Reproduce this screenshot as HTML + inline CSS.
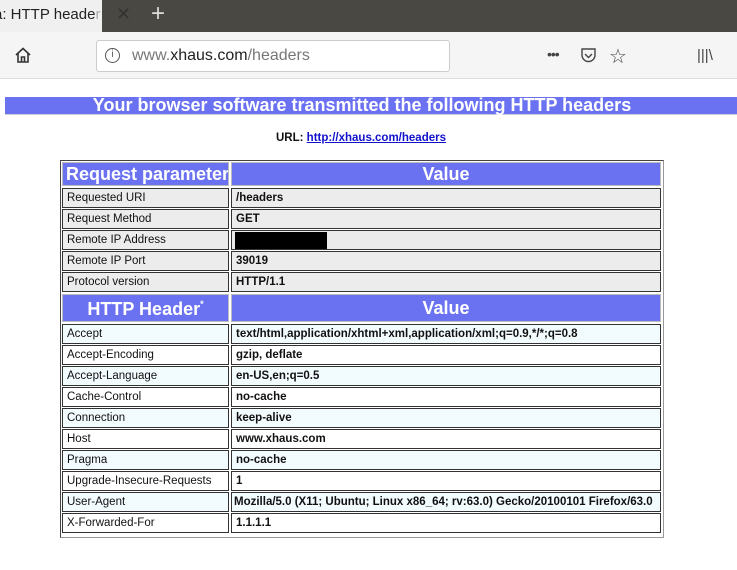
<!DOCTYPE html>
<html><head><style>
*{margin:0;padding:0;box-sizing:border-box}
body{width:737px;height:570px;background:#fff;position:relative;overflow:hidden;font-family:"Liberation Sans",sans-serif}
.a{position:absolute}
.c{position:absolute;border:1px solid #333;font-size:11.5px;line-height:18px;padding-left:4px;color:#111;white-space:nowrap;overflow:hidden}
.g{background:#ececec}
.w{background:#fff}
.l{background:#f2fbfe}
.h{background:#6b72f2;color:#fff;font-weight:bold;font-size:18px;border-color:#bbb}
.b{font-weight:bold}
</style></head><body>
<div class="a" style="left:0;top:0;width:737px;height:32px;background:#4a4843"></div>
<div class="a" style="left:0;top:0;width:102px;height:32px;background:#f0f0f0;overflow:hidden"><div style="position:absolute;left:-6px;top:6px;font-size:15px;color:#222;white-space:nowrap">a: HTTP heade<span style="color:#aaa">r</span></div></div>
<div class="a" style="left:116px;top:4px;font-size:18px;color:#333">✕</div>
<div class="a" style="left:151px;top:0px;font-size:24px;color:#ddd;font-weight:300">+</div>
<div class="a" style="left:0;top:32px;width:737px;height:47px;background:#f5f5f5;border-bottom:1px solid #ddd"></div>
<svg class="a" style="left:14px;top:46px" width="18" height="18" viewBox="0 0 18 18"><path d="M2 9L9 2.5L16 9M4 7.5V16H14V7.5M7.5 16V11H10.5V16" fill="none" stroke="#333" stroke-width="1.6"/></svg>
<div class="a" style="left:96px;top:40px;width:354px;height:32px;background:#fff;border:1px solid #ccc;border-radius:3px"></div>
<div class="a" style="left:105px;top:48px;width:15px;height:15px;border:1.3px solid #555;border-radius:50%;font-size:10px;line-height:12px;text-align:center;color:#555">i</div>
<div class="a" style="left:132px;top:47px;font-size:16px;color:#777">www.<span style="color:#222">xhaus.com</span>/headers</div>
<div class="a" style="left:547px;top:46px;font-size:14px;color:#444;letter-spacing:-1px">•••</div>
<svg class="a" style="left:580px;top:47px" width="17" height="17" viewBox="0 0 17 17"><path d="M2 2H15V8A6.5 6.5 0 0 1 2 8Z" fill="none" stroke="#444" stroke-width="1.4"/><path d="M5 7L8.5 10.5L12 7" fill="none" stroke="#444" stroke-width="1.4"/></svg>
<div class="a" style="left:609px;top:44px;font-size:20px;color:#444">☆</div>
<div class="a" style="left:697px;top:47px;font-size:15px;color:#444">|||\</div>
<div class="a" style="left:5px;top:97px;width:732px;height:18px;background:#6b72f2;border-bottom:1px solid #ccd"></div>
<div class="a" style="left:0px;top:95px;width:724px;text-align:center;color:#fff;font-weight:bold;font-size:18px;line-height:21px">Your browser software transmitted the following HTTP headers</div>
<div class="a" style="left:0;top:132px;width:722px;text-align:center;font-size:11.5px;font-weight:bold;color:#111">URL: <span style="color:#11c;text-decoration:underline">http://xhaus.com/headers</span></div>
<div class="a" style="left:60px;top:160px;width:604px;height:378px;border:1px solid #444;border-right-color:#999;border-bottom-color:#999"></div>
<div class="c h" style="left:62px;top:162px;width:167px;height:24px;line-height:22px;padding-left:3px">Request parameter</div>
<div class="c h" style="left:231px;top:162px;width:430px;height:24px;line-height:22px;text-align:center;padding:0">Value</div>
<div class="c g" style="left:62px;top:188px;width:167px;height:20px">Requested URI</div><div class="c g b" style="left:231px;top:188px;width:430px;height:20px">/headers</div>
<div class="c g" style="left:62px;top:209px;width:167px;height:20px">Request Method</div><div class="c g b" style="left:231px;top:209px;width:430px;height:20px">GET</div>
<div class="c g" style="left:62px;top:230px;width:167px;height:20px">Remote IP Address</div><div class="c g b" style="left:231px;top:230px;width:430px;height:20px"><div style="position:absolute;left:3px;top:1px;width:92px;height:17px;background:#000"></div></div>
<div class="c g" style="left:62px;top:251px;width:167px;height:20px">Remote IP Port</div><div class="c g b" style="left:231px;top:251px;width:430px;height:20px">39019</div>
<div class="c g" style="left:62px;top:272px;width:167px;height:20px">Protocol version</div><div class="c g b" style="left:231px;top:272px;width:430px;height:20px">HTTP/1.1</div>
<div class="c h" style="left:62px;top:294px;width:167px;height:28px;line-height:28px;text-align:center;padding:0">HTTP Header<span style="font-size:9px;position:relative;top:-8px">*</span></div>
<div class="c h" style="left:231px;top:294px;width:430px;height:28px;line-height:26px;text-align:center;padding:0">Value</div>
<div class="c l" style="left:62px;top:324px;width:167px;height:20px">Accept</div><div class="c l b" style="left:231px;top:324px;width:430px;height:20px">text/html,application/xhtml+xml,application/xml;q=0.9,*/*;q=0.8</div>
<div class="c w" style="left:62px;top:345px;width:167px;height:20px">Accept-Encoding</div><div class="c w b" style="left:231px;top:345px;width:430px;height:20px">gzip, deflate</div>
<div class="c l" style="left:62px;top:366px;width:167px;height:20px">Accept-Language</div><div class="c l b" style="left:231px;top:366px;width:430px;height:20px">en-US,en;q=0.5</div>
<div class="c w" style="left:62px;top:387px;width:167px;height:20px">Cache-Control</div><div class="c w b" style="left:231px;top:387px;width:430px;height:20px">no-cache</div>
<div class="c l" style="left:62px;top:408px;width:167px;height:20px">Connection</div><div class="c l b" style="left:231px;top:408px;width:430px;height:20px">keep-alive</div>
<div class="c w" style="left:62px;top:429px;width:167px;height:20px">Host</div><div class="c w b" style="left:231px;top:429px;width:430px;height:20px">www.xhaus.com</div>
<div class="c l" style="left:62px;top:450px;width:167px;height:20px">Pragma</div><div class="c l b" style="left:231px;top:450px;width:430px;height:20px">no-cache</div>
<div class="c w" style="left:62px;top:471px;width:167px;height:20px">Upgrade-Insecure-Requests</div><div class="c w b" style="left:231px;top:471px;width:430px;height:20px">1</div>
<div class="c l" style="left:62px;top:492px;width:167px;height:20px">User-Agent</div><div class="c l b" style="left:231px;top:492px;width:430px;height:20px;padding-left:2px">Mozilla/5.0 (X11; Ubuntu; Linux x86_64; rv:63.0) Gecko/20100101 Firefox/63.0</div>
<div class="c w" style="left:62px;top:513px;width:167px;height:20px">X-Forwarded-For</div><div class="c w b" style="left:231px;top:513px;width:430px;height:20px">1.1.1.1</div>
</body></html>
